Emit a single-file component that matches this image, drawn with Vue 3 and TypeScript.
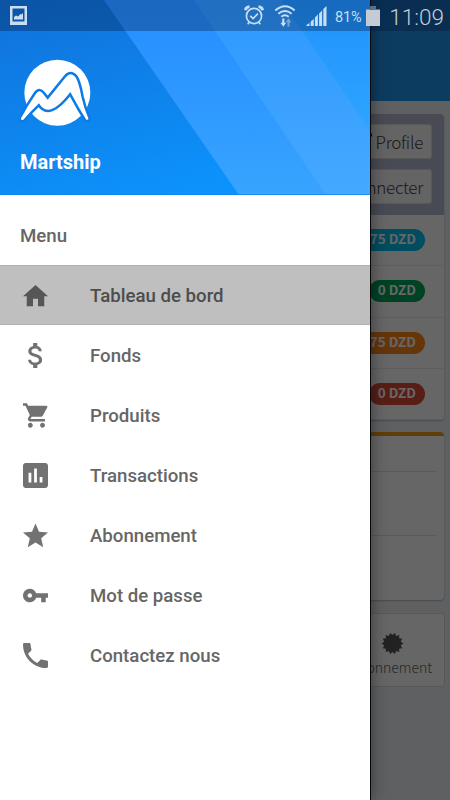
<script setup lang="ts">
interface MenuItem {
  label: string
  box: string
  icon: string
  active?: boolean
}

const items: MenuItem[] = [
  { label: 'Tableau de bord', box: '2 1.5 20 20', icon: 'M10 20v-6h4v6h5v-8h3L12 3 2 12h3v8z', active: true },
  { label: 'Fonds', box: '2.7 3 18 18', icon: 'M11.8 10.9c-2.27-.59-3-1.2-3-2.15 0-1.09 1.01-1.85 2.7-1.85 1.78 0 2.44.85 2.5 2.1h2.21c-.07-1.72-1.12-3.3-3.21-3.81V3h-3v2.16c-1.94.42-3.5 1.68-3.5 3.61 0 2.31 1.91 3.46 4.7 4.13 2.5.6 3 1.48 3 2.41 0 .69-.49 1.79-2.7 1.79-2.06 0-2.87-.92-2.98-2.1h-2.2c.12 2.19 1.76 3.42 3.68 3.83V21h3v-2.15c1.95-.37 3.5-1.5 3.5-3.55 0-2.84-2.43-3.81-4.7-4.4z' },
  { label: 'Produits', box: '1 1.8 20.5 20.5', icon: 'M7 18c-1.1 0-1.99.9-1.99 2S5.9 22 7 22s2-.9 2-2-.9-2-2-2zM1 2v2h2l3.6 7.59-1.35 2.45c-.16.28-.25.61-.25.96 0 1.1.9 2 2 2h12v-2H7.42c-.14 0-.25-.11-.25-.25l.03-.12.9-1.63h7.45c.75 0 1.41-.41 1.75-1.03l3.58-6.49A1.003 1.003 0 0 0 20 4H5.21l-.94-2H1zm16 16c-1.1 0-1.99.9-1.99 2s.89 2 1.99 2 2-.9 2-2-.9-2-2-2z' },
  { label: 'Transactions', box: '3 3 18 18', icon: 'M19 3H5c-1.1 0-2 .9-2 2v14c0 1.1.9 2 2 2h14c1.1 0 2-.9 2-2V5c0-1.1-.9-2-2-2zM9 17H7v-7h2v7zm4 0h-2V7h2v10zm4 0h-2v-4h2v4z' },
  { label: 'Abonnement', box: '2 1.7 20 20', icon: 'M12 17.27L18.18 21l-1.64-7.03L22 9.24l-7.19-.61L12 2 9.19 8.63 2 9.24l5.46 4.73L5.82 21z' },
  { label: 'Mot de passe', box: '1 1 22 22', icon: 'M12.65 10C11.83 7.67 9.61 6 7 6c-3.31 0-6 2.69-6 6s2.69 6 6 6c2.61 0 4.83-1.67 5.65-4H17v4h4v-4h2v-4H12.65zM7 14c-1.1 0-2-.9-2-2s.9-2 2-2 2 .9 2 2-.9 2-2 2z' },
  { label: 'Contactez nous', box: '3 3 18 18', icon: 'M6.62 10.79c1.44 2.83 3.76 5.14 6.59 6.59l2.2-2.2c.27-.27.67-.36 1.02-.24 1.12.37 2.33.57 3.57.57.55 0 1 .45 1 1V20c0 .55-.45 1-1 1-9.39 0-17-7.61-17-17 0-.55.45-1 1-1h3.5c.55 0 1 .45 1 1 0 1.25.2 2.45.57 3.57.11.35.03.74-.25 1.02l-2.2 2.2z' },
]

const balances = [
  { amount: '75 DZD', tone: 'aqua' },
  { amount: '0 DZD', tone: 'green' },
  { amount: '75 DZD', tone: 'orange' },
  { amount: '0 DZD', tone: 'red' },
]

// Fourteen-pointed seal
const seal = Array.from({ length: 28 }, (_, i) => {
  const r = i % 2 ? 8.8 : 11.3
  const a = (i * Math.PI) / 14 + Math.PI / 14
  return `${(12 + r * Math.sin(a)).toFixed(2)},${(12 - r * Math.cos(a)).toFixed(2)}`
}).join(' ')
</script>

<template>
  <div class="phone">
    <main class="page">
      <div class="toolbar"></div>
      <section class="card account">
        <div class="account-head">
          <button class="btn">
            <svg class="pencil" viewBox="0 0 14 14"><path d="M1 13l1-4L9.500 1.500q2-1 3 0t0 3L5 12z" /></svg>
            <span>Profile</span>
          </button>
          <button class="btn">Déconnecter</button>
        </div>
        <div v-for="(b, i) in balances" :key="i" class="balance">
          <span class="badge" :class="b.tone">{{ b.amount }}</span>
        </div>
      </section>
      <section class="card summary">
        <div class="summary-row first"></div>
        <div class="summary-row"></div>
      </section>
      <section class="tile">
        <svg class="seal" viewBox="0 0 24 24"><polygon :points="seal" /></svg>
        <span>Abonnement</span>
      </section>
    </main>

    <div class="scrim"></div>

    <aside class="drawer">
      <header class="header">
        <svg class="facets" viewBox="0 0 370 195" preserveAspectRatio="none">
          <defs>
            <linearGradient id="base" x1="0" y1="0" x2="0.45" y2="1">
              <stop offset="0" stop-color="#1171d9" />
              <stop offset="1" stop-color="#0c92fc" />
            </linearGradient>
            <linearGradient id="band" x1="0" y1="0" x2="0" y2="1">
              <stop offset="0" stop-color="#268eff" />
              <stop offset="0.45" stop-color="#2d97ff" />
              <stop offset="1" stop-color="#38a4ff" />
            </linearGradient>
            <linearGradient id="light" x1="0" y1="0" x2="0" y2="1">
              <stop offset="0" stop-color="#2f98ff" />
              <stop offset="1" stop-color="#44a9ff" />
            </linearGradient>
            <linearGradient id="edge" x1="0" y1="0" x2="0" y2="1">
              <stop offset="0" stop-color="#2092fc" />
              <stop offset="1" stop-color="#2ea5ff" />
            </linearGradient>
          </defs>
          <path fill="url(#base)" d="M0 0h370v195H0z" />
          <path fill="url(#band)" d="M104 0h266v195H239z" />
          <path fill="url(#light)" d="M194 0h176v195H326z" />
          <path fill="url(#edge)" d="M281 0h89v131z" />
          <path fill="#0f83ed" fill-opacity=".7" d="M0 194h370v1H0z" />
        </svg>
        <svg class="logo" viewBox="30 27 213 204">
          <circle cx="142" cy="128" r="99" />
          <path
            d="M33 205 L54 168 L78 131 Q88 116 99 131 L113 149 L168 81 Q182 64 196 81 Q206 96 214 140 Q221 172 235 205 Q236 211 229 209 L208 175 L181 126 Q116 211 87 160 L60 187 L40 209 Q32 212 33 205 Z"
            class="ridge"
          />
        </svg>
        <h1>Martship</h1>
      </header>
      <h2>Menu</h2>
      <nav>
        <a v-for="item in items" :key="item.label" class="item" :class="{ active: item.active }">
          <svg class="icon" :viewBox="item.box"><path :d="item.icon" /></svg>
          <span>{{ item.label }}</span>
        </a>
      </nav>
    </aside>

    <div class="status">
      <svg class="shot" viewBox="0 0 17 19">
        <path fill-rule="evenodd" d="M0 0h17v19H0zM2.500 2.500v13h12v-13z" />
        <path d="M4 13.500V11l2-1.500 2 1 2.500-2.500 1 .5L13 7v6.500z" />
      </svg>
      <svg class="alarm" viewBox="0 0 20 21">
        <g fill="none" stroke="#c9def2" stroke-width="1.700">
          <circle cx="10" cy="11" r="7.600" />
          <path d="M6.300 10.800l2.800 2.700 4.800-4.800M5.300 17.300l-1.600 2M14.700 17.300l1.600 2" />
          <path d="M1.300 5.300Q2 2 5.500 1.700M18.700 5.300Q18 2 14.500 1.700" stroke-width="2.800" />
        </g>
      </svg>
      <svg class="wifi" viewBox="0 0 22 22">
        <g fill="none" stroke="#c9def2" stroke-width="2">
          <path d="M1.300 5.500Q11-3 20.700 5.500M4.300 8.700q6.700-5.400 13.400 0M7.300 11.700q3.700-3 7.400 0" />
        </g>
        <path d="M8.200 13.500h2.200v4.200h1.800l-2.900 4-2.900-4h1.800z" />
        <path d="M13.500 21.500h2v-4.200h1.800l-2.800-4-2.800 4h1.800z" opacity=".5" />
      </svg>
      <svg class="signal" viewBox="0 0 20 20">
        <path d="M0 20v-1l3-2v3zM4.200 20v-4.500l3-2.500v7zM8.400 20v-8.500l3-3V20zM12.600 20V7.500l3-3V20zM16.800 20V3L20 0v20z" />
      </svg>
      <span class="percent">81%</span>
      <svg class="battery" viewBox="0 0 14 20">
        <path opacity=".45" d="M4 0h6v3h4v3H0V3h4z" />
        <path d="M0 4h14v16H0z" />
      </svg>
      <time>11:09</time>
    </div>
  </div>
</template>

<style>
body {
  margin: 0;
}
</style>

<style scoped>
.phone {
  position: relative;
  width: 450px;
  height: 800px;
  overflow: hidden;
  background: #ecf0f5;
  font-family: Roboto, "Liberation Sans", sans-serif;
}

.page {
  display: flex;
  flex-direction: column;
  height: 800px;
  font-family: "Noto Sans CJK SC", "Open Sans", sans-serif;
}

.toolbar {
  height: 101px;
  flex: none;
  background: #2196f3;
}

.card {
  box-sizing: border-box;
  margin: 0 6px 0 14px;
  background: #fff;
  border-radius: 4px;
  overflow: hidden;
  box-shadow: 0 1px 2px rgba(0, 0, 0, 0.25);
}

.account {
  margin-top: 13px;
  height: 306px;
}

.account-head {
  box-sizing: border-box;
  height: 101px;
  padding: 10px 12px;
  display: flex;
  flex-direction: column;
  align-items: flex-end;
  gap: 10px;
  background: #b4bcd2;
}

.btn {
  box-sizing: border-box;
  height: 35px;
  padding: 0 8px;
  display: flex;
  align-items: center;
  gap: 3px;
  border: 1px solid #ddd;
  border-radius: 3px;
  background: #f9f9f9;
  color: #444;
  font: 300 17px/33px "Noto Sans CJK SC", "Open Sans", sans-serif;
  letter-spacing: -0.300px;
}

.btn span {
  margin-top: -1px;
}

.pencil {
  width: 14px;
  height: 14px;
  margin-bottom: 6px;
}

.balance {
  box-sizing: border-box;
  height: 51.300px;
  padding-right: 19px;
  display: flex;
  align-items: center;
  justify-content: flex-end;
  border-bottom: 1px solid #ececec;
}

.badge {
  box-sizing: border-box;
  height: 22px;
  padding: 0 9px;
  border-radius: 11px;
  color: #fff;
  font-size: 13.500px;
  font-weight: 700;
  line-height: 19px;
}

.aqua {
  background: #00c0ef;
}

.green {
  background: #00a65a;
}

.orange {
  background: #ff851b;
}

.red {
  background: #dd4b39;
}

.summary {
  margin-top: 12px;
  height: 168px;
  border-top: 4px solid #f39c12;
}

.summary-row {
  height: 63px;
  margin-right: 7px;
  border-bottom: 1px solid #e2e2e2;
}

.summary-row.first {
  height: 35px;
}

.tile {
  box-sizing: border-box;
  width: 104px;
  height: 74px;
  margin: 13px 5px 0 auto;
  padding-top: 18px;
  display: flex;
  flex-direction: column;
  align-items: center;
  border: 1px solid #ddd;
  border-radius: 3px;
  background: #fff;
  color: #666;
  font-size: 14px;
  font-weight: 300;
  line-height: 24px;
}

.tile span {
  margin-right: 4px;
}

.seal {
  width: 23px;
  height: 23px;
  margin-right: 1px;
  flex: none;
  fill: #555;
}

.scrim {
  position: absolute;
  inset: 0;
  background: rgba(0, 0, 0, 0.6);
}

.drawer {
  position: absolute;
  top: 0;
  left: 0;
  width: 370px;
  height: 800px;
  background: #fff;
  color: #666;
  box-shadow: 0 0 16px rgba(0, 0, 0, 0.5), 1px 0 0 #080808;
}

.header {
  position: relative;
  box-sizing: border-box;
  height: 195px;
  padding: 59px 20px 0;
}

.facets {
  position: absolute;
  inset: 0;
  width: 370px;
  height: 195px;
}

.logo {
  position: relative;
  display: block;
  width: 71px;
  height: 68px;
  fill: #fff;
}

.ridge {
  stroke: #0d7ae5;
  stroke-width: 15;
  stroke-linejoin: round;
  paint-order: stroke;
}

h1 {
  position: relative;
  margin: 23px 0 0;
  color: #fff;
  font-size: 20px;
  font-weight: 700;
  line-height: 24px;
}

h2 {
  margin: 0;
  padding: 11px 20px 0;
  height: 59px;
  font-size: 18.700px;
  font-weight: 500;
  line-height: 60px;
}

.item {
  box-sizing: border-box;
  height: 60px;
  padding-left: 22.500px;
  display: flex;
  align-items: center;
  gap: 42.500px;
  font-size: 18.650px;
  font-weight: 500;
}

.item span {
  margin-top: 2px;
}

.item.active {
  background: #bfbfbf;
  color: #4d4d4d;
  box-shadow: inset 0 1px #b2b2b2, inset 0 -1px #b2b2b2;
}

.icon {
  width: 25px;
  height: 25px;
  fill: #727272;
}

.active .icon {
  fill: #565656;
}

.status {
  position: absolute;
  top: 0;
  left: 0;
  box-sizing: border-box;
  width: 450px;
  height: 31px;
  padding: 0 6px 0 10px;
  display: flex;
  align-items: center;
  background: rgba(0, 15, 50, 0.3);
  color: #c9def2;
  fill: #c9def2;
}

.shot {
  width: 17px;
  height: 19px;
}

.alarm {
  width: 20px;
  height: 21px;
  margin-left: 217px;
}

.wifi {
  width: 22px;
  height: 22px;
  margin-left: 10px;
}

.signal {
  width: 21px;
  height: 20px;
  margin-left: 10px;
}

.percent {
  width: 28px;
  margin: 3px 0 0 8px;
  font-size: 14.500px;
  letter-spacing: -0.200px;
}

.battery {
  width: 14px;
  height: 20px;
  margin-left: 3px;
  fill: #c3cbd4;
}

time {
  margin: 3px 0 0 auto;
  color: #c6ccd3;
  font-size: 22.500px;
  font-weight: 300;
}
</style>
